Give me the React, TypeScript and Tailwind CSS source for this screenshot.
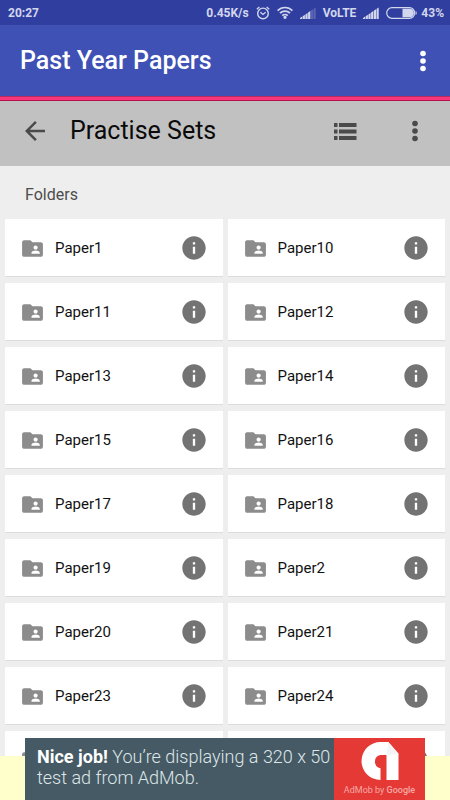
import React from 'react';
import { MdArrowBack, MdFolderShared, MdInfo } from 'react-icons/md';

const folders = [
    'Paper1', 'Paper10', 'Paper11', 'Paper12', 'Paper13', 'Paper14',
    'Paper15', 'Paper16', 'Paper17', 'Paper18', 'Paper19', 'Paper2',
    'Paper20', 'Paper21', 'Paper23', 'Paper24', '', '',
];

const DotsIcon: React.FC = () => (
    <svg viewBox="0 0 6 22" className="w-[6px] h-[22px] fill-current" aria-hidden="true">
        <circle cx="3" cy="3.5" r="2.8" />
        <circle cx="3" cy="11" r="2.8" />
        <circle cx="3" cy="18.5" r="2.8" />
    </svg>
);

const ListIcon: React.FC = () => (
    <svg viewBox="0 0 23 17" className="w-[23px] h-[17px] fill-current" aria-hidden="true">
        <path d="M0 0h3.500v4H0zM5 0h17.500v4H5zM0 6.500h3.500v4H0zM5 6.500h17.500v4H5zM0 13h3.500v4H0zM5 13h17.500v4H5z" />
    </svg>
);

const AlarmIcon: React.FC = () => (
    <svg viewBox="0 0 14 14" className="w-[14px] h-[14px]" fill="none" stroke="currentColor" aria-hidden="true">
        <circle cx="7" cy="7.4" r="5.3" strokeWidth="1.4" />
        <path d="M4.4 6.2L7 8.4l2.6-2.2M.8 3.2L3.4 1M13.2 3.2L10.6 1" strokeWidth="1.3" />
    </svg>
);

const WifiIcon: React.FC = () => (
    <svg viewBox="0 0 16 13" className="w-[16px] h-[13px]" fill="none" stroke="currentColor" strokeWidth="1.7" aria-hidden="true">
        <path d="M.6 4.6a10.4 10.4 0 0 1 14.8 0M3 7.2a7 7 0 0 1 10 0M5.3 9.6a3.9 3.9 0 0 1 5.4 0" />
        <circle cx="8" cy="11.3" r=".8" fill="currentColor" />
    </svg>
);

const SignalIcon: React.FC<{ level: number }> = ({ level }) => (
    <svg viewBox="0 0 16 12" className="w-[16px] h-[12px] fill-current" aria-hidden="true">
        {[0, 1, 2, 3, 4, 5].map(i => (
            <path
                key={i}
                d={`M${i * 2.7} 12V${11 - i * 1.8}l2.2-1.5V12z`}
                opacity={i < level ? 1 : 0.25}
            />
        ))}
    </svg>
);

const BatteryIcon: React.FC = () => (
    <svg viewBox="0 0 31 12" className="w-[31px] h-[12px]" aria-hidden="true">
        <rect x=".7" y=".7" width="28" height="10.6" rx="5.3" fill="none" stroke="currentColor" strokeWidth="1.2" />
        <path d="M16.5 1.8h7.2a4.2 4.2 0 0 1 0 8.4h-7.2z" fill="currentColor" />
        <path d="M29.6 4c1.5.6 1.5 3.4 0 4z" fill="currentColor" />
    </svg>
);

const AdMobLogo: React.FC = () => (
    <svg viewBox="0 0 38 38" className="w-[38px] h-[38px]" aria-hidden="true">
        <path
            d="M19.5 38A19 19 0 0 1 19.5 0H27.500L37.500 11.500V38H25.500V13H19.500a6.700 6.700 0 0 0 0 13.200z"
            fill="#fff"
        />
        <path d="M25.500 12.500h12L27.500.5z" fill="#f4f4f4" />
    </svg>
);

const StatusBar: React.FC = () => (
    <div className="flex h-[25px] shrink-0 items-center bg-[#303f9f] pl-2 pr-1.5 text-[12px] font-bold text-[#d3d7ee]">
        <span className="grow">20:27</span>
        <div className="flex items-center gap-[7px]">
            <span>0.45K/s</span>
            <AlarmIcon />
            <WifiIcon />
            <SignalIcon level={4} />
            <span>VoLTE</span>
            <SignalIcon level={6} />
            <div className="flex items-center gap-1">
                <BatteryIcon />
                <span>43%</span>
            </div>
        </div>
    </div>
);

const FolderCard: React.FC<{ name: string }> = ({ name }) => (
    <li className="flex h-[58px] items-center border-b border-[#dcdcdc] bg-white px-[15px] pt-px">
        <MdFolderShared className="size-[25px] shrink-0 text-[#8c8c8c]" />
        <span className="grow pl-[10px] text-[15px] text-[#111111]">{name}</span>
        <button type="button" aria-label="Folder details" className="text-[#737373]">
            <MdInfo className="size-[28px]" />
        </button>
    </li>
);

const AdBanner: React.FC = () => (
    <footer className="z-10 flex h-11 shrink-0 items-end justify-center bg-[#ffffcc] px-[25px]">
        <a href="#ad" className="flex h-[62px] w-full max-w-[400px] bg-[#455a64]">
            <p className="grow pl-3 pt-2 text-[18px] leading-[21px] font-light text-[#dfe6e9]">
                <strong className="font-bold text-white">Nice job!</strong> You’re displaying a 320 x 50 test ad from AdMob.
            </p>
            <div className="flex w-[91px] shrink-0 flex-col items-center bg-[#e53935] pt-1">
                <AdMobLogo />
                <span className="pt-[3px] text-[9px] leading-[14px] whitespace-nowrap text-[#f5a9a7]">
                    AdMob by <span className="font-medium">Google</span>
                </span>
            </div>
        </a>
    </footer>
);

const App: React.FC = () => {
    return (
        <div className="flex h-screen flex-col overflow-hidden bg-[#eeeeee] font-['Roboto',sans-serif]">
            <StatusBar />
            <header className="flex h-[71px] shrink-0 items-center justify-between bg-[#3f51b5] pl-5 pr-6 text-white">
                <h1 className="text-[25px] font-medium">Past Year Papers</h1>
                <button type="button" aria-label="More options">
                    <DotsIcon />
                </button>
            </header>
            <div className="h-[5px] shrink-0 border-t border-b border-t-[#b52c62] border-b-[#b80f4a] bg-[#f6367a]" />
            <div className="flex h-[65px] shrink-0 items-center bg-[#c1c1c1] pl-5 pr-8 pb-[5px] text-[#4a4a4a]">
                <button type="button" aria-label="Back">
                    <MdArrowBack className="size-[30px]" />
                </button>
                <h2 className="grow pl-5 text-[25px] text-[#0a0a0a]">Practise Sets</h2>
                <button type="button" aria-label="List view" className="pr-[55px]">
                    <ListIcon />
                </button>
                <button type="button" aria-label="Folder options">
                    <DotsIcon />
                </button>
            </div>
            <main className="min-h-0 flex-1 overflow-hidden px-[5px]">
                <h3 className="flex h-[53px] items-center pl-5 pt-1 text-[16px] text-[#4d4d4d]">Folders</h3>
                <ul className="grid grid-cols-2 gap-x-[5px] gap-y-[6px]">
                    {folders.map((name, i) => (
                        <FolderCard key={i} name={name} />
                    ))}
                </ul>
            </main>
            <AdBanner />
        </div>
    );
};

export default App;
